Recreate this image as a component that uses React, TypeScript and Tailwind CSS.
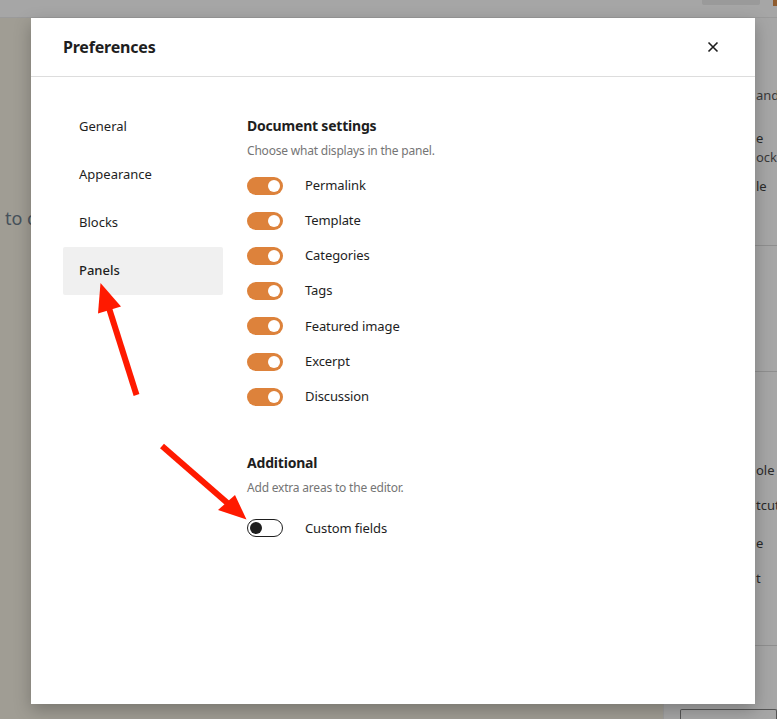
import React from "react";

const font = { fontFamily: '"Noto Sans", "Open Sans", sans-serif' };

function Toggle({ on }: { on: boolean }) {
  return on ? (
    <div className="w-[36px] h-[18px] rounded-full bg-[#dd823b] flex items-center justify-end pr-[3px] shrink-0">
      <div className="w-[12px] h-[12px] rounded-full bg-white" />
    </div>
  ) : (
    <div className="w-[36px] h-[18px] rounded-full bg-white border border-[#1e1e1e] flex items-center pl-[2px] shrink-0">
      <div className="w-[12px] h-[12px] rounded-full bg-[#1e1e1e]" />
    </div>
  );
}

function Row({ label, on = true }: { label: string; on?: boolean }) {
  return (
    <div className="h-[35.2px] flex items-center">
      <Toggle on={on} />
      <span className="ml-[22px] text-[13px] text-[#1e1e1e] tracking-[-0.1px]">{label}</span>
    </div>
  );
}

export default function App() {
  const nav = ["General", "Appearance", "Blocks", "Panels"];
  return (
    <div className="relative w-[777px] h-[719px] overflow-hidden bg-[#a09d94]" style={font}>
      {/* top bar */}
      <div className="h-[18px] bg-[#a6a6a6] border-b border-[#9a9a9a] flex justify-end items-start">
        <div className="w-[58px] h-[5px] bg-[#9a9a9a] rounded-b-[2px] mr-[13px]" />
        <div className="w-[4px] h-[6px] bg-[#8e5c2f]" />
      </div>
      <div className="flex h-[701px]">
        {/* canvas */}
        <div className="flex-1 pt-[187px] overflow-hidden">
          <p className="whitespace-nowrap text-[18px] text-[#46515b] pl-[5px]">to c</p>
        </div>
        {/* sidebar */}
        <div className="w-[114px] bg-[#a6a6a6] border-l border-[#9c9c9c] text-[13px] leading-[18px] text-[#2a2a2a] flex flex-col">
          <div className="pl-[92px] pt-[68px] whitespace-nowrap text-[#3a3a3a]">and</div>
          <div className="pl-[92px] mt-[25px] whitespace-nowrap">e</div>
          <div className="pl-[92px] mt-[1px] whitespace-nowrap text-[#3a3a3a]">ock a</div>
          <div className="pl-[92px] mt-[11px] whitespace-nowrap">le</div>
          <div className="mt-[50px] border-t border-[#8f8f8f] h-[128px]" />
          <div className="border-t border-[#8f8f8f] pl-[92px] pt-[89px] whitespace-nowrap flex flex-col">
            <div>ole b</div>
            <div className="mt-[17px]">tcut</div>
            <div className="mt-[20px]">e</div>
            <div className="mt-[17px]">t</div>
          </div>
          <div className="mt-[58px] border-t border-[#8f8f8f] flex-1 pt-[63px] pl-[16px]">
            <div className="h-[10px] border border-[#555] border-b-0 rounded-t-[2px]" />
          </div>
        </div>
      </div>

      {/* modal */}
      <div className="absolute left-[31px] top-[18px] w-[724px] h-[686px] bg-white shadow-[0_6px_16px_rgba(0,0,0,0.25)] flex flex-col">
        <div className="h-[59px] border-b border-[#dddddd] flex items-center justify-between pl-[32px] pr-[30px] shrink-0">
          <h1 className="text-[16px] font-bold text-[#1e1e1e] tracking-[-0.2px]">Preferences</h1>
          <svg width="24" height="24" viewBox="0 0 24 24">
            <path d="M7.5 7.5l9 9M16.5 7.5l-9 9" stroke="#1e1e1e" strokeWidth="1.6" fill="none" />
          </svg>
        </div>
        <div className="flex pl-[32px] pt-[26px]">
          <nav className="w-[160px] flex flex-col">
            {nav.map((n) => (
              <div
                key={n}
                className={
                  n === "Panels"
                    ? "h-[48px] flex items-center pl-[16px] text-[13px] text-[#1e1e1e] font-medium bg-[#f0f0f0] rounded-[2px]"
                    : "h-[48px] flex items-center pl-[16px] text-[13px] text-[#1e1e1e]"
                }
              >
                {n}
              </div>
            ))}
          </nav>
          <div className="ml-[24px] pt-[13px] flex flex-col">
            <h2 className="text-[14px] leading-[20px] font-bold text-[#1e1e1e] tracking-[-0.2px]">Document settings</h2>
            <p className="mt-[7px] text-[12px] leading-[16px] text-[#757575] tracking-[-0.2px]">Choose what displays in the panel.</p>
            <div className="mt-[9px] flex flex-col">
              <Row label="Permalink" />
              <Row label="Template" />
              <Row label="Categories" />
              <Row label="Tags" />
              <Row label="Featured image" />
              <Row label="Excerpt" />
              <Row label="Discussion" />
            </div>
            <h2 className="mt-[39px] text-[14px] leading-[20px] font-bold text-[#1e1e1e] tracking-[-0.2px]">Additional</h2>
            <p className="mt-[7px] text-[12px] leading-[16px] text-[#757575] tracking-[-0.2px]">Add extra areas to the editor.</p>
            <div className="mt-[14.5px]">
              <Row label="Custom fields" on={false} />
            </div>
          </div>
        </div>
      </div>

      {/* annotation arrows */}
      <svg className="absolute left-0 top-0 pointer-events-none" width="777" height="719">
        <line x1="136.5" y1="395" x2="108" y2="305" stroke="#ff1a00" strokeWidth="6" />
        <polygon points="100.5,283 98,313.5 121,306.5" fill="#ff1a00" />
        <line x1="162" y1="446" x2="232" y2="507" stroke="#ff1a00" strokeWidth="6" />
        <polygon points="246.5,519.5 218,510 235,495" fill="#ff1a00" />
      </svg>
    </div>
  );
}
